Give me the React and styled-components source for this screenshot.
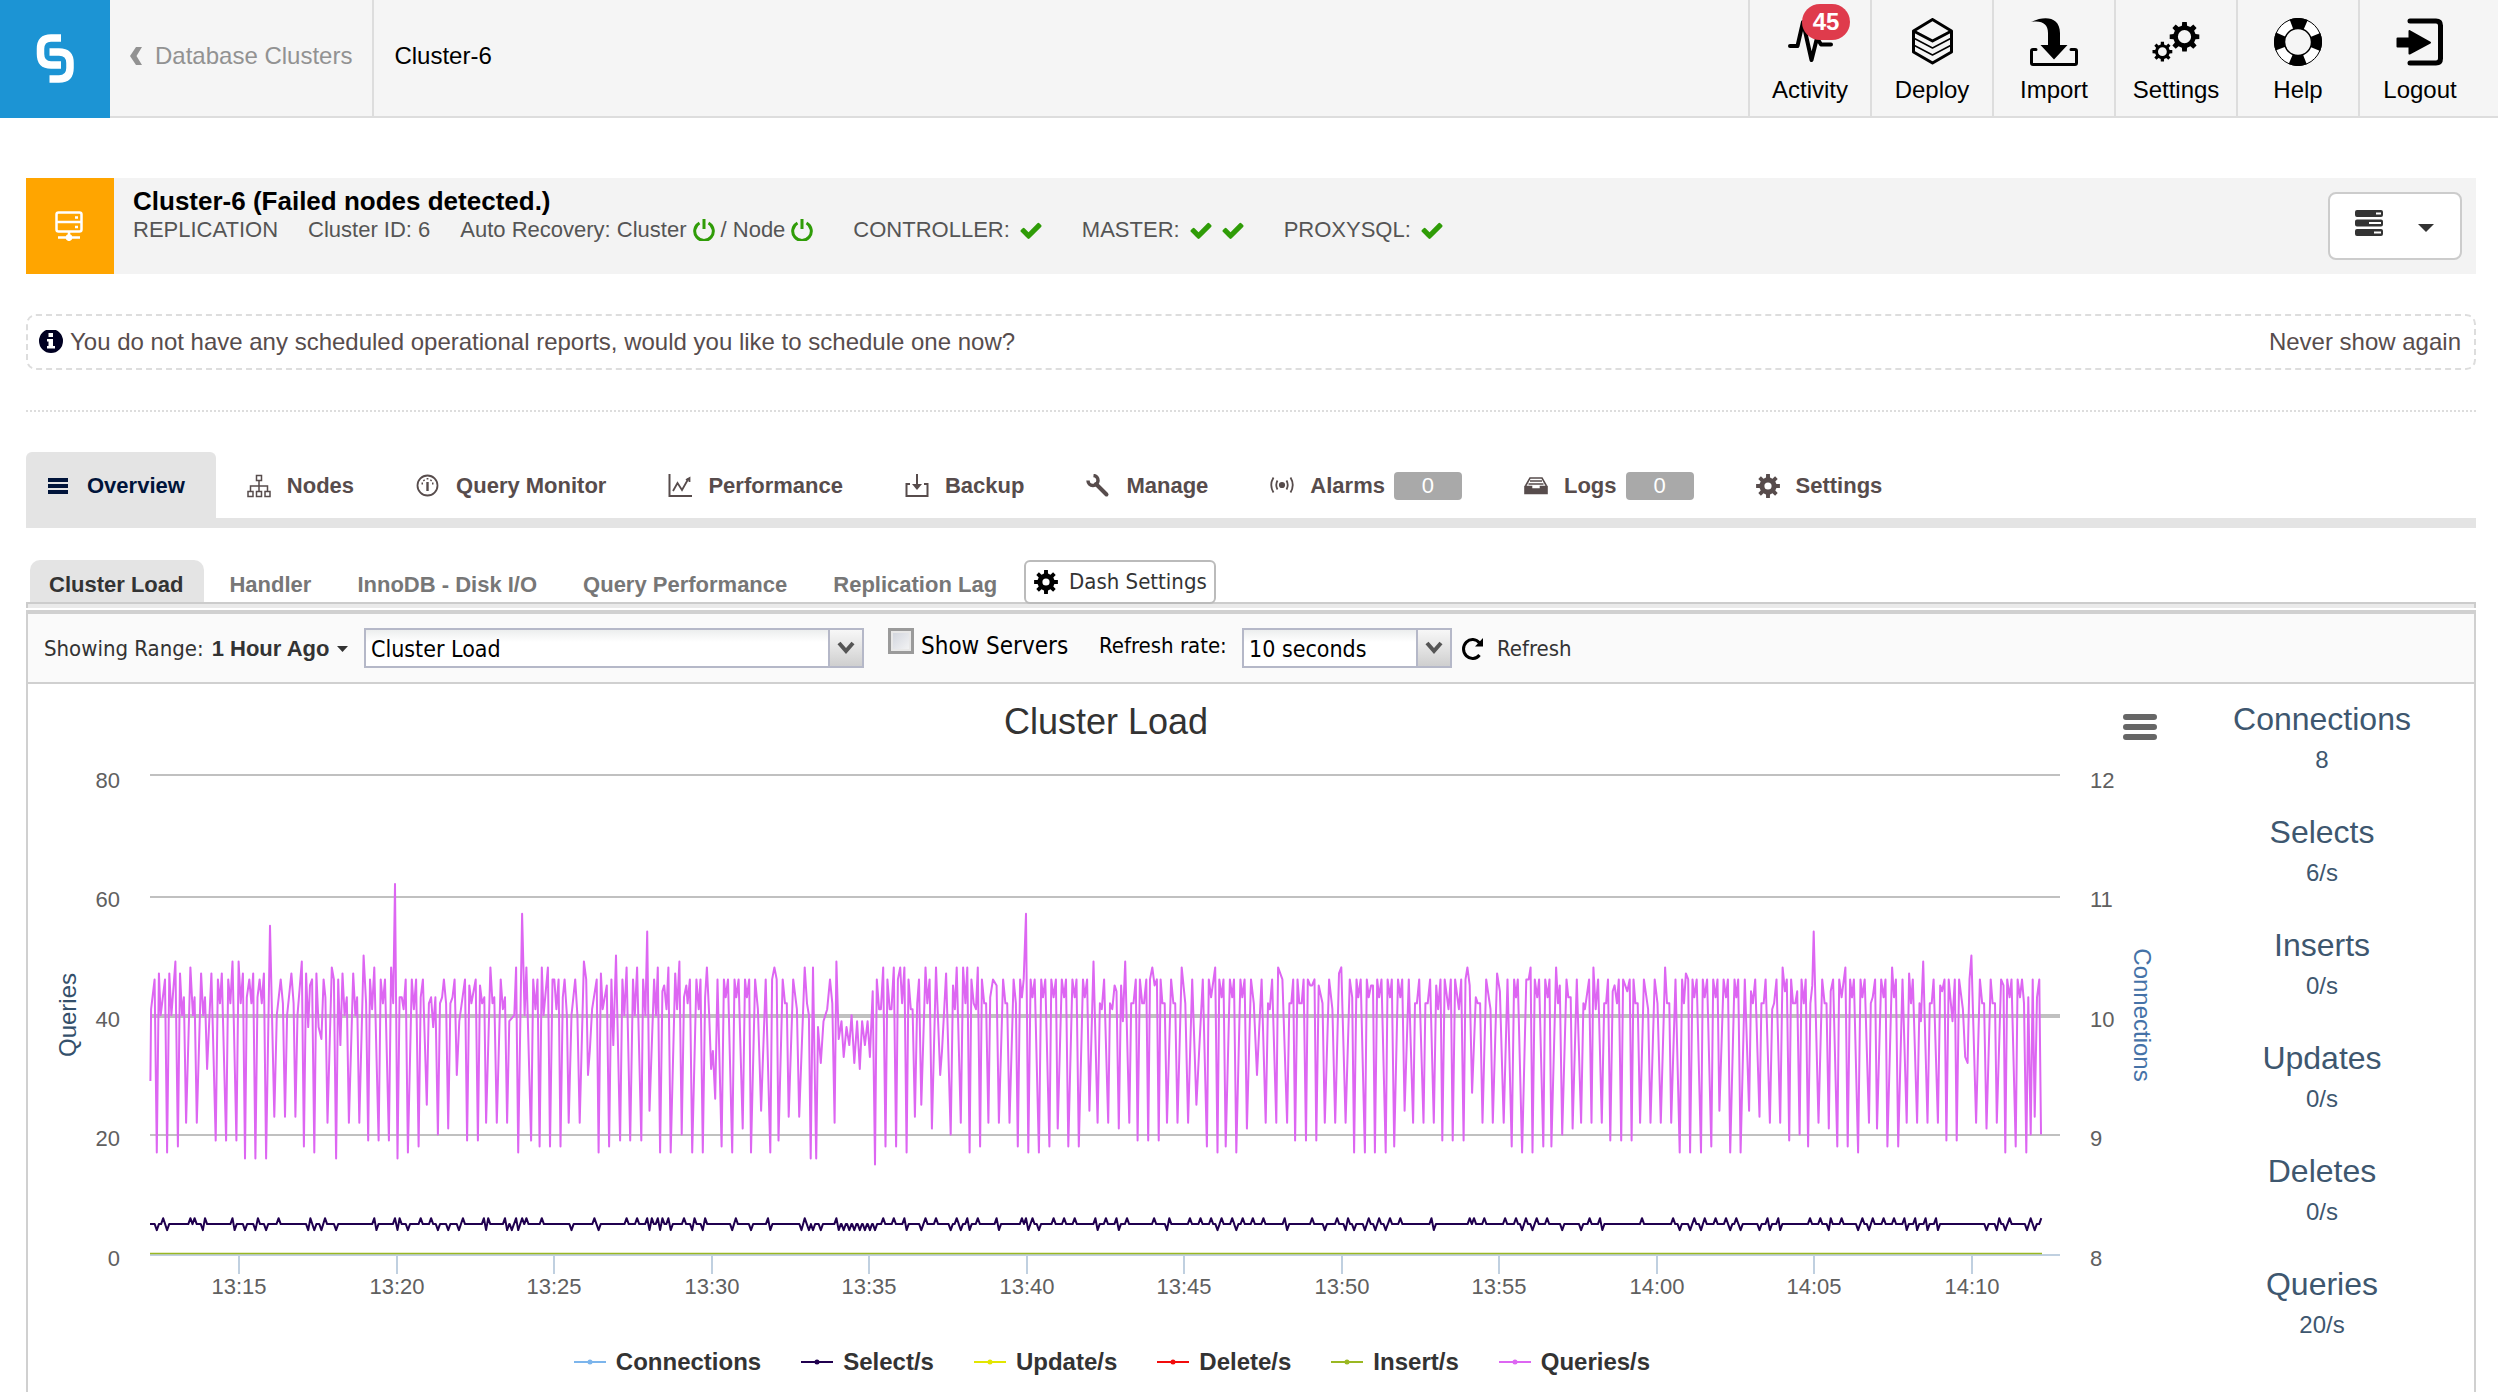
import React from "react";
import styled, { createGlobalStyle } from "styled-components";

const sans = `"Liberation Sans", Arial, Helvetica, sans-serif`;
const ui = `"DejaVu Sans Condensed", Tahoma, "Noto Sans", sans-serif`;

const GlobalStyle = createGlobalStyle`
  *, *::before, *::after { box-sizing: border-box; }
  body { margin: 0; background: #fff; color: #333; font-family: ${sans}; font-size: 24px; line-height: 28px; overflow-x: hidden; }
  button, select, input { font: inherit; color: inherit; margin: 0; }
  button { background: none; border: 0; padding: 0; text-align: inherit; cursor: pointer; }
  a { color: inherit; text-decoration: none; }
  h1, h2, dl, dd, p { margin: 0; font-weight: normal; }
  svg { display: block; flex: none; }
`;

/* ---------- top bar ---------- */

const TopBar = styled.header`
  display: flex;
  height: 118px;
  background: #f5f5f5;
  box-shadow: inset 0 -2px #dddddd;
`;
const Logo = styled.a`
  display: flex;
  width: 110px;
  background: #1c94d4;
  align-items: center;
  justify-content: center;
`;
const Crumb = styled.a`
  display: flex;
  align-items: center;
  gap: 13px;
  padding: 0 20px 6px;
  color: ${(p) => (p.$current ? "#000" : "#929292")};
  border-right: ${(p) => (p.$current ? 0 : "2px solid #dddddd")};
`;
const TopNav = styled.nav`
  display: flex;
  margin-left: auto;
  padding-right: 18px;
`;
const TopLink = styled.a`
  position: relative;
  display: flex;
  flex-direction: column;
  align-items: center;
  gap: 10px;
  width: 122px;
  padding-top: 18px;
  border-left: 2px solid #dddddd;
  color: #000;
`;
const Count = styled.span`
  position: absolute;
  top: 4px;
  left: 52px;
  width: 48px;
  height: 36px;
  border-radius: 18px;
  background: #df3b4c;
  color: #fff;
  font-weight: bold;
  line-height: 36px;
  text-align: center;
`;

/* ---------- cluster summary ---------- */

const Main = styled.main`
  padding: 60px 22px 0 26px;
`;
const Summary = styled.section`
  display: flex;
  height: 96px;
  background: #f3f3f3;
`;
const SummaryIcon = styled.div`
  display: flex;
  width: 88px;
  padding-right: 2px;
  background: #ffa500;
  align-items: center;
  justify-content: center;
`;
const SummaryText = styled.div`
  padding: 7px 19px;
`;
const Title = styled.h1`
  color: #000;
  font-size: 26px;
  font-weight: bold;
  line-height: 32px;
`;
const Facts = styled.div`
  display: flex;
  gap: 30px;
  color: #555;
  font-size: 22px;
  line-height: 26px;
`;
const Fact = styled.span`
  display: flex;
  align-items: center;
  gap: ${(p) => (p.$status ? 10 : 6)}px;
  margin-left: ${(p) => (p.$status ? 10 : 0)}px;
`;
const ActionsButton = styled.button`
  display: flex;
  align-items: center;
  justify-content: space-between;
  width: 134px;
  height: 68px;
  margin: 14px 14px 0 auto;
  padding: 0 26px 6px 25px;
  border: 2px solid #cccccc;
  border-radius: 8px;
  background: #fff;
`;
const Notice = styled.section`
  display: flex;
  align-items: center;
  gap: 7px;
  height: 56px;
  margin: 40px 0;
  padding: 0 13px 0 11px;
  border: 2px dashed #dddddd;
  border-radius: 10px;
  color: #574c4c;
`;
const Dismiss = styled.button`
  margin-left: auto;
`;
const Divider = styled.hr`
  margin: 0 0 40px;
  border: 0;
  border-top: 2px dotted #dddddd;
`;

/* ---------- tabs ---------- */

const Tabs = styled.nav`
  display: flex;
  gap: 10px;
  border-bottom: 10px solid #e4e4e4;
`;
const Tab = styled.a`
  display: flex;
  align-items: center;
  gap: 16px;
  height: 66px;
  padding: 2px 31px 0 21px;
  border-radius: 6px 6px 0 0;
  background: ${(p) => (p.$active ? "#e4e4e4" : "transparent")};
  color: ${(p) => (p.$active ? "#00143a" : "#574c4c")};
  font-size: 22px;
  font-weight: bold;
  line-height: 26px;
`;
const TabCount = styled.span`
  width: 68px;
  margin-left: -7px;
  border-radius: 4px;
  background: #a9a9a9;
  color: #fff;
  font-weight: normal;
  line-height: 28px;
  text-align: center;
`;
const SubTabs = styled.nav`
  display: flex;
  gap: 6px;
  height: 42px;
  margin-top: 32px;
  padding-left: 4px;
`;
const SubTab = styled.a`
  padding: 12px 21px 0 19px;
  border-radius: 10px 10px 0 0;
  background: ${(p) => (p.$active ? "#e4e4e4" : "transparent")};
  color: ${(p) => (p.$active ? "#333" : "#777")};
  font-size: 22px;
  font-weight: bold;
  line-height: 26px;
`;
const DashButton = styled.button`
  display: flex;
  align-items: center;
  gap: 11px;
  width: 192px;
  height: 44px;
  padding: 0 8px;
  border: 2px solid #bbbbbb;
  border-radius: 6px;
  background: #fff;
  font-family: ${ui};
  font-size: 22px;
  white-space: nowrap;
`;

/* ---------- dashboard panel ---------- */

const Rule = styled.div`
  position: relative;
  z-index: -1;
  height: 6px;
  margin-bottom: 2px;
  border: 2px solid #cccccc;
  border-bottom: 0;
  background: #eaeaea;
`;
const Panel = styled.section`
  border: 2px solid #d0d0d0;
  border-top-width: 4px;
  border-bottom: 0;
`;
const Toolbar = styled.form`
  display: flex;
  align-items: center;
  height: 70px;
  padding: 0 16px;
  border-bottom: 2px solid #d0d0d0;
  background: #fafafa;
  font-family: ${ui};
  font-size: 22px;
`;
const RangeButton = styled.button`
  display: flex;
  align-items: center;
  gap: 8px;
  width: 320px;
  padding-top: 2px;
  white-space: nowrap;
  b { font-family: ${sans}; }
`;
const Combo = styled.span`
  position: relative;
  display: flex;
  width: ${(p) => p.$width}px;
  height: 40px;
`;
const ComboSelect = styled.select`
  appearance: none;
  width: 100%;
  padding: 2px 40px 0 5px;
  border: 2px solid #b5b8c8;
  border-radius: 0;
  background: linear-gradient(#eceeee, #fff 12px);
  color: #000;
  font-size: 23px;
`;
const ComboTrigger = styled.span`
  position: absolute;
  top: 2px;
  right: 0;
  bottom: 2px;
  display: flex;
  width: 36px;
  align-items: center;
  justify-content: center;
  border: solid #b5b8c8;
  border-width: 0 2px;
  background: linear-gradient(#f7f7f7, #e4e4e4 50%, #cfcfcf);
  pointer-events: none;
`;
const Check = styled.input`
  appearance: none;
  width: 26px;
  height: 26px;
  margin: 0 0 14px 24px;
  border: 3px solid #9a9a9a;
  background: linear-gradient(135deg, #cfd3dc, #f6f6f6);
  box-shadow: inset 0 0 0 2px #e8e8e8;
`;
const Label = styled.label`
  width: ${(p) => p.$width}px;
  padding: 0 0 4px 7px;
  color: #000;
  font-size: ${(p) => p.$size}px;
  white-space: nowrap;
`;
const RefreshButton = styled.button`
  display: flex;
  align-items: center;
  gap: 12px;
  margin-left: 9px;
  padding-top: 2px;
`;
const PanelBody = styled.div`
  display: grid;
  grid-template-columns: minmax(0, 1fr) 304px;
`;
const ChartArea = styled.div`
  position: relative;
  padding-bottom: 16px;
`;
const ChartSvg = styled.svg`
  width: 100%;
  height: auto;
  font-family: ${sans};
  font-size: 22px;
  fill: #606060;
`;
const MenuButton = styled.button`
  position: absolute;
  top: 30px;
  right: 13px;
`;
const Legend = styled.div`
  display: flex;
  justify-content: center;
  gap: 40px;
  padding-left: 26px;
`;
const LegendItem = styled.button`
  display: flex;
  align-items: center;
  gap: 10px;
  font-weight: bold;
`;
const Stats = styled.dl`
  display: flex;
  flex-direction: column;
  gap: 31px;
  padding-top: 15px;
  color: #3e576f;
  text-align: center;
  line-height: 42px;
`;
const StatName = styled.dt`
  font-size: 32px;
  line-height: 40px;
`;

/* ---------- icons ---------- */

const gear = (cx, cy, outer, inner, hole, teeth = 8) => {
  const pts = [];
  const step = (Math.PI * 2) / teeth;
  for (let i = 0; i < teeth; i++) {
    const a = i * step - Math.PI / 2;
    [[-0.3, inner], [-0.2, outer], [0.2, outer], [0.3, inner]].forEach(([o, r]) =>
      pts.push(`${(cx + r * Math.cos(a + o * step)).toFixed(1)} ${(cy + r * Math.sin(a + o * step)).toFixed(1)}`)
    );
  }
  return `M${pts.join("L")}ZM${cx - hole} ${cy}a${hole} ${hole} 0 1 0 ${hole * 2} 0a${hole} ${hole} 0 1 0 ${-hole * 2} 0Z`;
};

const Icon = ({ w = 24, h = w, box = `0 0 ${w} ${h}`, children, ...rest }) => (
  <svg width={w} height={h} viewBox={box} fill="none" stroke="currentColor" aria-hidden="true" {...rest}>
    {children}
  </svg>
);
const Solid = (props) => <Icon fill="currentColor" stroke="none" {...props} />;

const GearIcon = () => <Solid fillRule="evenodd"><path d={gear(12, 12, 12, 8.6, 3.6)} /></Solid>;
const Caret = ({ w = 16, h = 8 }) => <Solid w={w} h={h}><path d={`M0 0H${w}L${w / 2} ${h}Z`} /></Solid>;
const Tick = () => (
  <Solid w={22} h={17} box="121 270 1550 1252" color="#2f9c07">
    <path d="M1671 566q0 40-28 68l-724 724-136 136q-28 28-68 28t-68-28l-136-136-362-362q-28-28-28-68t28-68l136-136q28-28 68-28t68 28l294 295 656-657q28-28 68-28t68 28l136 136q28 28 28 68z" />
  </Solid>
);
const Power = () => (
  <Icon w={22} color="#2f9c07" strokeWidth="3">
    <path d="M6.5 4A9.3 9.3 0 1 0 15.500 4M11 0V10" />
  </Icon>
);

const topLinks = [
  ["Activity", <Icon w={48} strokeWidth="4" strokeLinejoin="round" strokeLinecap="round"><path d="M4 28H11.500L17 4L25.500 42L31 20L35 26.500H45" /></Icon>],
  ["Deploy", <Icon w={48} strokeWidth="3" strokeLinejoin="round"><path d="M24.500 1.500L43.500 13V34L24.500 45L5.500 34V13ZM5.500 13L24.500 23L43.500 13" /><path strokeWidth="1.500" d="M5.500 20L24.500 30L43.500 20M5.500 27L24.500 37L43.500 27" /></Icon>],
  ["Import", <Icon w={48}><path fill="currentColor" stroke="none" d="M1 4C15-3 30-1 30 15V27H37.500L24 41.500L10.500 27H18V15C18 6 12 2 1 4Z" /><path strokeWidth="3" strokeLinecap="round" strokeLinejoin="round" d="M6 31.500H3Q1.500 31.500 1.500 33V45Q1.500 46.500 3 46.500H45Q46.500 46.500 46.500 45V33Q46.500 31.500 45 31.500H41" /></Icon>],
  ["Settings", <Solid w={48} fillRule="evenodd"><path d={gear(32.5, 18.7, 15, 11.3, 6.6)} /><path d={gear(10.4, 33.7, 10, 7.4, 4.4)} /></Solid>],
  ["Help", <Icon w={48}><circle cx="24" cy="24" r="23.500" fill="#fff" strokeWidth="1" /><circle cx="24" cy="24" r="18.750" strokeWidth="10.500" strokeDasharray="14.400 15.050" transform="rotate(-22 24 24)" /><circle cx="24" cy="24" r="13.500" fill="#f5f5f5" strokeWidth="1.500" /></Icon>],
  ["Logout", <Icon w={48} strokeLinecap="round" strokeLinejoin="round"><path strokeWidth="5" d="M14 3H40Q44.500 3 44.500 7.500V40.500Q44.500 45 40 45H14" /><path fill="currentColor" strokeWidth="2" d="M1.500 20.500H13.500V13L34 24.500L13.500 35.500V28.500H1.500Z" /></Icon>],
];

const tabs = [
  ["Overview", <Solid><path d="M1 4H21V8H1ZM1 10H21V14H1ZM1 16H21V20H1Z" /></Solid>],
  ["Nodes", <Icon strokeWidth="1.500"><path d="M9.500 1.500H14.500V6.500H9.500ZM1 17.500H6V22.500H1ZM9.500 17.500H14.500V22.500H9.500ZM18 17.500H23V22.500H18ZM12 6.500V17.500M3.500 17.500V12H20.500V17.500" /></Icon>],
  ["Query Monitor", <Icon strokeWidth="1.800"><circle cx="11.500" cy="11.500" r="10" /><path d="M11.500 8V17" strokeWidth="2.400" /><path d="M5.500 9.500H7M7.500 5.800L8.500 6.800M11.500 4V5.500M15.500 5.800L14.500 6.800M17.500 9.500H16" /></Icon>],
  ["Performance", <Icon strokeWidth="2"><path d="M1.500 0V22H24" /><path d="M5 17L9.500 9L14 16L20.500 4.500M18 6L21.500 4V8" strokeWidth="1.800" /></Icon>],
  ["Backup", <Icon strokeWidth="2"><path d="M5 10H1.500V22H22.500V10H19M12 0V13" /><path fill="currentColor" stroke="none" d="M7 10H17L12 16Z" /></Icon>],
  ["Manage", <Icon strokeWidth="4" strokeLinecap="round"><path d="M10 10L20.500 20.500" /><path strokeWidth="3.500" strokeLinecap="butt" d="M7.500 1.500A5 5 0 1 1 2 6.500" /></Icon>],
  ["Alarms", <Icon strokeWidth="1.800"><circle cx="12" cy="11" r="2.200" fill="currentColor" /><path d="M7.500 6.500Q5 11 7.500 15.500M16.500 6.500Q19 11 16.500 15.500M3.500 3.500Q-1 11 3.500 18.500M20.500 3.500Q25 11 20.500 18.500" /></Icon>, 0],
  ["Logs", <Icon strokeWidth="1.600"><path d="M1.500 12L6 4H18L22.500 12M6 7H18M4.500 10H19.500" /><path fill="currentColor" d="M1 12.500H7.500V15H16.500V12.500H23V19.500H1Z" /></Icon>, 0],
  ["Settings", <GearIcon />],
];

/* ---------- chart ---------- */

const colors = { conn: "#7cb5ec", sel: "#20004f", upd: "#e2e600", del: "#f20c0c", ins: "#9ab822", qry: "#dd66f2" };

// Each block holds "x:value" samples on its own time scale (offset, samples per pixel).
const queries = [
  { at: -150, per: 2.8, s: "421:29 423:41 433:46 439:17 445:47 450:40 462:46 468:17 474:47 480:40 491:49 498:18 504:47 510:40 515:43 521:22 533:48 540:40 545:43 551:22 563:47 569:40 574:43 580:31 592:47 604:19 610:46 616:42 621:47 633:19 639:46 645:42 651:49 662:19 668:49 674:42 680:47 686:16 691:43 698:46 704:42 709:47 715:16 721:43 727:46 733:42 739:47 745:16 756:55 768:23 775:40 786:46 792:42 798:23 804:40 816:47 822:42 827:23 833:40 845:49 851:18 857:47 863:38 868:45 874:46 880:17 886:47 892:38 900:36 906:46 911:43 917:22 929:48 935:46 941:16 947:46 953:35 959:47 965:40 971:43 977:22 989:47 995:40 1000:43 1006:22 1018:50 1025:42 1031:19 1036:46 1042:41 1048:48 1060:19 1066:46 1072:42 1078:46 1089:19 1095:48 1101:42 1106:62 1113:16 1119:43 1125:43 1130:41 1136:46 1142:17 1153:46 1159:41 1165:46 1172:18 1178:43 1184:46 1195:25 1201:42 1207:43 1213:38 1219:43 1226:20 1232:42 1238:43 1243:46 1249:42 1255:21 1261:42 1267:43 1273:46 1279:30 1286:39 1302:46 1308:19 1314:45 1320:42 1332:46 1338:19 1344:45 1350:42 1356:43 1361:22 1373:48 1379:42 1384:43 1391:22 1402:46 1408:41 1414:43 1420:22 1426:39 1440:40 1445:48 1451:17 1462:57 1469:40 1474:48 1487:19 1493:46 1499:41 1505:46 1511:18 1517:48 1522:40 1534:48 1540:18 1547:46 1552:46 1558:41 1564:46" },
  { at: 410, per: 2.178, s: "1:18 6:43 10:46 15:40 19:22 25:40 33:46 38:40 43:22 52:49 57:46 61:30 65:34 70:41 80:46 84:17 89:47 93:41 102:45 107:18 112:46 116:35 122:50 131:19 136:46 140:40 145:48 153:19 159:46 163:40 168:48 177:19 181:46 186:40 190:54 195:24 205:46 209:40 213:48 218:17 223:44 227:45 232:41 236:48 241:17 251:47 255:41 260:49 265:20 270:43 275:45 278:42 283:46 288:17 297:46 302:41 306:46 311:17 316:43 320:48 325:40 329:31 333:34 338:26 343:46 352:18 357:46 361:43 366:46 375:17 380:46 384:43 389:46 398:21 403:46 407:43 412:46 416:17 425:46 431:41 438:24 448:46 458:17 462:46 467:48 472:46 476:19 485:46 490:42 494:42 498:23 508:46 516:41 521:23 533:48 538:42 542:40 546:16 551:48 558:16 562:38 568:32 574:39 582:41 588:46 593:42 598:22 602:49 607:36 613:39 618:33 624:38 630:35 635:40 641:32 647:39 653:31 658:39 664:35 670:39 675:33 681:44 686:15 690:46 695:41 699:41 704:48 709:18 713:46 718:41 722:41 727:48 732:18 736:46 741:48 745:42 750:48 755:17 759:46 764:41 768:41 773:23 778:42 782:46 787:25 796:48 800:42 805:46 810:21 819:48 828:30 832:34 841:47 851:20 856:45 860:41 864:48 873:22 878:48 883:42 887:48 892:17 896:46 901:42 906:41 910:48 915:18 919:46 924:42 928:42 933:22 937:43 943:46 951:45 956:22 965:46 970:42 974:42 979:22 988:46 993:42 997:18 1002:46 1006:43 1010:46 1015:57 1020:17 1025:46 1029:43 1034:46 1043:17 1048:46 1052:43 1057:46 1066:18 1070:46 1075:43 1080:46 1084:21 1093:46 1098:43 1102:46 1107:18 1116:46 1121:43 1125:46 1130:18 1139:46 1143:43 1148:46 1153:24 1162:49 1171:22 1176:42 1180:41 1185:46 1194:22 1198:42 1203:41 1208:45 1212:44 1217:21 1222:45 1226:39 1231:49 1240:22 1244:42 1249:42 1254:46 1258:19 1263:46 1268:42 1272:42 1277:46 1281:19 1285:46 1290:48 1295:45 1300:46 1304:19 1308:46 1312:42 1317:42 1322:22 1331:46 1336:42 1340:42 1345:22 1354:48 1362:42 1368:22 1377:46 1386:25 1400:46 1409:18 1413:46 1418:43 1427:48 1432:17 1436:46 1441:43 1445:46 1450:18 1459:46 1464:43 1468:46 1473:17 1482:46 1486:43 1491:46 1496:21 1505:46 1511:42 1518:30 1528:46 1537:22 1542:42 1546:41 1551:46 1560:22 1564:48" },
  { at: 1130, per: 2.119, s: "5:46 15:22 20:42 24:42 28:46 32:19 37:46 41:42 46:42 50:46 55:19 59:46 64:45 68:45 73:46 77:19 82:45 90:42 95:22 104:46 111:41 117:22 125:47 130:48 139:22 148:46 153:43 157:17 162:46 166:43 171:46 180:17 184:46 188:43 193:45 197:45 201:17 206:46 210:43 215:46 224:17 228:46 233:43 237:46 242:18 250:46 255:43 259:46 264:24 273:46 282:22 286:42 290:42 295:46 304:22 308:42 313:42 318:46 326:22 331:45 335:41 340:46 344:19 349:46 357:41 362:46 366:19 371:46 379:41 384:46 389:19 393:46 397:48 402:45 407:27 415:43 419:42 424:42 429:22 437:46 446:41 451:22 460:47 466:44 474:22 482:46 491:18 496:46 500:43 504:46 513:17 522:46 527:46 531:48 535:17 540:46 545:43 549:46 558:18 562:46 567:43 571:46 575:18 585:48 589:42 593:45 598:20 607:46 611:43 616:43 620:21 629:46 638:22 643:42 646:41 655:46 660:22 664:48 669:41 674:46 682:22 687:42 691:42 695:46 700:19 705:44 709:45 714:42 718:46 723:19 727:46 736:44 741:46 745:19 749:46 753:42 758:42 763:22 771:46 780:41 785:22 794:46 800:42 807:22 816:48 820:42 825:42 829:22 838:46 847:17 852:46 856:42 860:47 865:46 869:17 874:46 878:43 883:46 892:17 896:46 900:43 905:46 914:18 918:46 923:43 927:46 931:24 940:46 945:43 949:46 954:17 963:46 967:43 971:46 976:17 985:46 994:24 998:44 1002:42 1007:46 1016:23 1020:42 1025:42 1029:46 1038:22 1043:41 1047:42 1052:46 1060:22 1065:48 1070:44 1074:46 1079:19 1083:46 1087:42 1092:42 1096:44 1101:20 1105:46 1110:42 1114:46 1119:18 1124:42 1128:45 1131:54 1141:22 1149:46 1154:42 1158:42 1163:21 1167:44 1172:46 1181:18 1185:46 1190:43 1198:48 1203:18 1208:46 1212:43 1216:46 1225:17 1230:46 1234:43 1239:46 1248:22 1252:42 1256:43 1261:46 1265:21 1274:46 1279:43 1283:46 1287:18 1297:48 1301:43 1305:46 1310:18 1319:46 1328:22 1333:47 1337:42 1341:46 1350:22 1355:42 1358:39 1363:49 1372:22 1377:42 1381:42 1385:46 1394:22 1399:45 1403:44 1408:46 1412:19 1417:46 1425:39 1430:46 1434:19 1439:46 1447:41 1452:33 1457:32 1461:46 1465:50 1475:22 1483:46 1488:42 1492:42 1497:21 1506:46 1510:42 1515:42 1519:22 1528:46 1533:45 1537:17 1541:46 1546:43 1550:46 1559:18 1563:46" },
  { at: 1850, per: 3, s: "60:43 66:46 72:42 79:17 85:43 92:20 98:46 104:23 111:43 118:46 123:20" },
];
const selects = [
  { at: -150, per: 2.8, up: "457 533 545 574 651 722 780 869 910 1048 1106 1119 1178 1207 1296 1355 1367 1414 1445 1462 1474 1517", down: "439 468 568 657 686 715 745 863 880 900 941 1054 1113 1142 1226 1255 1285 1361 1420 1433 1451" },
  { at: 410, per: 2.178, up: "75 145 168 190 200 213 223 236 270 293 316 383 453 533 602 704 727 750 796 819 864 887 910 951 1006 1015 1029 1075 1098 1121 1166 1189 1212 1235 1294 1327 1372 1395 1418 1441 1464 1487 1509 1532", down: "25 84 195 218 241 288 311 375 416 458 526 542 551 568 607 618 630 641 653 664 675 686 755 787 851 873 892 956 1020 1043 1171 1217 1322 1432 1473" },
  { at: 1130, per: 2.119, up: "10 68 121 144 188 210 233 255 321 402 411 433 477 500 521 544 566 656 678 767 833 878 900 923 945 967 1033 1056 1123 1145 1167 1190 1234 1256 1279 1301 1323 1346 1368 1390 1524 1546", down: "15 95 139 157 180 202 224 326 513 535 598 638 683 847 869 892 954 976 1016 1038 1060 1163 1225 1248 1328 1350 1372 1394 1497 1519 1537" },
  { at: 1850, per: 3, up: "92 124", down: "81 104" },
];

const PLOT = { left: 122, right: 2032, zero: 570, unit: 5.97 };
const px = (b, x) => PLOT.left + b.at + x / b.per;
const py = (v) => PLOT.zero - v * PLOT.unit;
const toPath = (pts) => "M" + pts.map(([x, v]) => `${x.toFixed(1)} ${py(v).toFixed(1)}`).join("L");

const queryPath = toPath(queries.flatMap((b) => b.s.split(" ").map((t) => {
  const [x, v] = t.split(":").map(Number);
  return [px(b, x), v];
})));

const blips = selects.flatMap((b) => [
  ...b.up.split(" ").map((x) => [px(b, +x), 6]),
  ...b.down.split(" ").map((x) => [px(b, +x), 4]),
]).sort((a, b) => a[0] - b[0]);
const selectPath = toPath([[PLOT.left, 5], ...blips.flatMap(([x, v], i) => {
  const prev = blips[i - 1];
  const next = blips[i + 1];
  const out = [[x, v]];
  if (!prev || x - prev[0] > 4) out.unshift([x - 2.1, 5]);
  if (next && next[0] - x > 4) out.push([x + 2.1, 5]);
  return out;
})]);

const times = ["13:15", "13:20", "13:25", "13:30", "13:35", "13:40", "13:45", "13:50", "13:55", "14:00", "14:05", "14:10"];
const rows = [[80, 12, 91], [60, 11, 213], [40, 10, 332], [20, 9, 451]];

const Chart = () => (
  <ChartSvg viewBox="0 0 2142 664" role="img" aria-label="Cluster Load">
    <text x="1078" y="50" textAnchor="middle" fontSize="36" fill="#333">Cluster Load</text>
    {rows.map(([l, r, y], i) => (
      <g key={l}>
        <path d={`M${PLOT.left} ${y}H${PLOT.right}`} stroke="#c0c0c0" strokeWidth={l === 40 ? 4 : 2} />
        <text x="92" y={Math.round(104 + i * 119.4)} textAnchor="end">{l}</text>
        <text x="2062" y={Math.round(104 + i * 119.4)}>{r}</text>
      </g>
    ))}
    <text x="92" y="582" textAnchor="end">0</text>
    <text x="2062" y="582">8</text>
    <path d={`M${PLOT.left} 571H${PLOT.right}`} stroke="#c0d0e0" strokeWidth="2" />
    {times.map((t, i) => {
      const x = Math.round(211 + i * 157.5);
      return (
        <g key={t}>
          <path d={`M${x} 571V590`} stroke="#c0d0e0" strokeWidth="2" />
          <text x={x} y="610" textAnchor="middle">{t}</text>
        </g>
      );
    })}
    <path d={`M${PLOT.left} 569.500H2014`} stroke={colors.ins} strokeWidth="1.500" />
    <path d={selectPath} fill="none" stroke={colors.sel} strokeWidth="2" strokeLinejoin="round" />
    <path d={queryPath} fill="none" stroke={colors.qry} strokeWidth="2" strokeLinejoin="round" />
    <text transform="translate(48 331) rotate(-90)" textAnchor="middle" fontSize="24" fill="#34506b">Queries</text>
    <text transform="translate(2106 331) rotate(90)" textAnchor="middle" fontSize="24" fill="#4572a7">Connections</text>
  </ChartSvg>
);

const legend = [["Connections", colors.conn], ["Select/s", colors.sel], ["Update/s", colors.upd], ["Delete/s", colors.del], ["Insert/s", colors.ins], ["Queries/s", colors.qry]];
const stats = [["Connections", "8"], ["Selects", "6/s"], ["Inserts", "0/s"], ["Updates", "0/s"], ["Deletes", "0/s"], ["Queries", "20/s"]];

const Dropdown = ({ id, width, value, label }) => (
  <Combo $width={width}>
    <ComboSelect id={id} aria-label={label} defaultValue={value}>
      <option>{value}</option>
    </ComboSelect>
    <ComboTrigger>
      <Icon w={18} h={14} strokeWidth="4" color="#555"><path d="M2 2L9 10L16 2" /></Icon>
    </ComboTrigger>
  </Combo>
);

export default function App() {
  return (
    <>
      <GlobalStyle />
      <TopBar>
        <Logo href="#" aria-label="Home">
          <Icon w={40} h={50} box="35 33 40 50" stroke="#fff" strokeWidth="7.500">
            <path d="M61 37H51Q40.500 37 40.500 48V53Q40.500 64 51 64H61" />
            <path d="M49.500 51H59Q70 51 70 62V67Q70 78 59 78H49.500" />
          </Icon>
        </Logo>
        <Crumb href="#">
          <Solid w={12} h={18}><path d="M6 0H12L6.500 9L12 18H6L0 9Z" /></Solid>
          Database Clusters
        </Crumb>
        <Crumb href="#" $current>Cluster-6</Crumb>
        <TopNav>
          {topLinks.map(([name, icon]) => (
            <TopLink href="#" key={name}>
              {icon}
              {name}
              {name === "Activity" && <Count>45</Count>}
            </TopLink>
          ))}
        </TopNav>
      </TopBar>

      <Main>
        <Summary>
          <SummaryIcon>
            <Icon w={28} h={30} stroke="#fff" strokeWidth="2.500">
              <rect x="1.500" y="1.500" width="25" height="19" rx="2" />
              <path d="M1.500 11H26.500M14 21V30M3 26.500H11M17 26.500H25" />
              <path d="M20 6.500H23M20 16H23" />
              <circle cx="14" cy="26.500" r="2" fill="#fff" />
            </Icon>
          </SummaryIcon>
          <SummaryText>
            <Title>Cluster-6 (Failed nodes detected.)</Title>
            <Facts>
              <Fact>REPLICATION</Fact>
              <Fact>Cluster ID: 6</Fact>
              <Fact>Auto Recovery: Cluster <Power /> / Node <Power /></Fact>
              <Fact $status>CONTROLLER: <Tick /></Fact>
              <Fact $status>MASTER: <Tick /> <Tick /></Fact>
              <Fact $status>PROXYSQL: <Tick /></Fact>
            </Facts>
          </SummaryText>
          <ActionsButton aria-label="Cluster actions">
            <Solid w={28} h={26} color="#333">
              <path fillRule="evenodd" d="M2 0H26Q28 0 28 2V5Q28 7 26 7H2Q0 7 0 5V2Q0 0 2 0ZM21 2.500V4.500H26V2.500ZM2 9.500H26Q28 9.500 28 11.500V14.500Q28 16.500 26 16.500H2Q0 16.500 0 14.500V11.500Q0 9.500 2 9.500ZM14 12V14H26V12ZM2 19H26Q28 19 28 21V24Q28 26 26 26H2Q0 26 0 24V21Q0 19 2 19ZM19 21.500V23.500H26V21.500Z" />
            </Solid>
            <Icon w={16} h={8} box="0 -5 16 8" overflow="visible" fill="#333" stroke="none"><path d="M0 0H16L8 8Z" /></Icon>
          </ActionsButton>
        </Summary>

        <Notice>
          <Solid color="#000022" fillRule="evenodd">
            <path d="M0 11A12 12 0 1 1 24 11A12 12 0 1 1 0 11ZM9.500 3V7H14V3ZM8 9V11.500H9.500V16H8V18.500H16V16H14V9Z" overflow="visible" />
          </Solid>
          <p>You do not have any scheduled operational reports, would you like to schedule one now?</p>
          <Dismiss>Never show again</Dismiss>
        </Notice>
        <Divider />

        <Tabs>
          {tabs.map(([name, icon, count], i) => (
            <Tab href="#" key={name} $active={i === 0}>
              {icon}
              {name}
              {count !== undefined && <TabCount>{count}</TabCount>}
            </Tab>
          ))}
        </Tabs>

        <SubTabs>
          {["Cluster Load", "Handler", "InnoDB - Disk I/O", "Query Performance", "Replication Lag"].map((name, i) => (
            <SubTab href="#" key={name} $active={i === 0}>{name}</SubTab>
          ))}
          <DashButton><Solid fillRule="evenodd" color="#000"><path d={gear(12, 12, 12, 8.6, 3.6)} /></Solid>Dash Settings</DashButton>
        </SubTabs>
        <Rule />

        <Panel>
          <Toolbar>
            <RangeButton type="button">
              Showing Range: <b>1 Hour Ago</b> <Caret w={11} h={6} />
            </RangeButton>
            <Dropdown width={500} value="Cluster Load" label="Dashboard" />
            <Check type="checkbox" id="servers" />
            <Label htmlFor="servers" $width={178} $size={24}>Show Servers</Label>
            <Label htmlFor="rate" $width={150} $size={22}>Refresh rate:</Label>
            <Dropdown id="rate" width={210} value="10 seconds" />
            <RefreshButton type="button">
              <Icon strokeWidth="3" color="#000"><path d="M18.500 18A9 9.500 0 1 1 18.500 6" /><path d="M22 1V9.500H14Z" fill="currentColor" stroke="none" /></Icon>
              Refresh
            </RefreshButton>
          </Toolbar>
          <PanelBody>
            <ChartArea>
              <Chart />
              <MenuButton aria-label="Chart menu">
                <Icon w={34} h={26} stroke="#666" strokeWidth="6" strokeLinecap="round"><path d="M3 3H31M3 13H31M3 23H31" /></Icon>
              </MenuButton>
              <Legend>
                {legend.map(([name, color]) => (
                  <LegendItem key={name}>
                    <Icon w={32} h={6} stroke={color} strokeWidth="2"><path d="M0 3H32" /><circle cx="16" cy="3" r="1.500" fill={color} /></Icon>
                    {name}
                  </LegendItem>
                ))}
              </Legend>
            </ChartArea>
            <Stats>
              {stats.map(([name, value]) => (
                <div key={name}>
                  <StatName>{name}</StatName>
                  <dd>{value}</dd>
                </div>
              ))}
            </Stats>
          </PanelBody>
        </Panel>
      </Main>
    </>
  );
}
